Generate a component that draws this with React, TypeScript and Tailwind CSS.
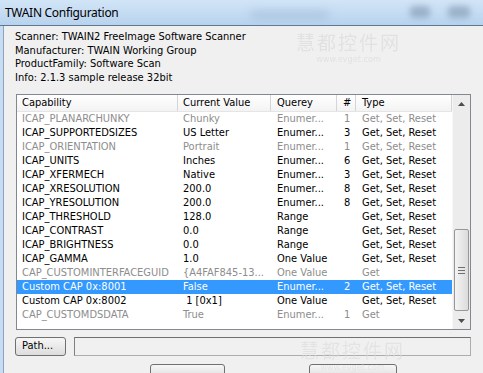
import React from "react";

type Row = {
  cap: string;
  val: string;
  q: string;
  n: string;
  type: string;
  off?: boolean;
  sel?: boolean;
};

const rows: Row[] = [
  { cap: "ICAP_PLANARCHUNKY", val: "Chunky", q: "Enumer...", n: "1", type: "Get, Set, Reset", off: true },
  { cap: "ICAP_SUPPORTEDSIZES", val: "US Letter", q: "Enumer...", n: "3", type: "Get, Set, Reset" },
  { cap: "ICAP_ORIENTATION", val: "Portrait", q: "Enumer...", n: "1", type: "Get, Set, Reset", off: true },
  { cap: "ICAP_UNITS", val: "Inches", q: "Enumer...", n: "6", type: "Get, Set, Reset" },
  { cap: "ICAP_XFERMECH", val: "Native", q: "Enumer...", n: "3", type: "Get, Set, Reset" },
  { cap: "ICAP_XRESOLUTION", val: "200.0", q: "Enumer...", n: "8", type: "Get, Set, Reset" },
  { cap: "ICAP_YRESOLUTION", val: "200.0", q: "Enumer...", n: "8", type: "Get, Set, Reset" },
  { cap: "ICAP_THRESHOLD", val: "128.0", q: "Range", n: "", type: "Get, Set, Reset" },
  { cap: "ICAP_CONTRAST", val: "0.0", q: "Range", n: "", type: "Get, Set, Reset" },
  { cap: "ICAP_BRIGHTNESS", val: "0.0", q: "Range", n: "", type: "Get, Set, Reset" },
  { cap: "ICAP_GAMMA", val: "1.0", q: "One Value", n: "", type: "Get, Set, Reset" },
  { cap: "CAP_CUSTOMINTERFACEGUID", val: "{A4FAF845-13...", q: "One Value", n: "", type: "Get", off: true },
  { cap: "Custom CAP 0x:8001", val: "False", q: "Enumer...", n: "2", type: "Get, Set, Reset", sel: true },
  { cap: "Custom CAP 0x:8002", val: " 1 [0x1]", q: "One Value", n: "", type: "Get, Set, Reset" },
  { cap: "CAP_CUSTOMDSDATA", val: "True", q: "Enumer...", n: "1", type: "Get", off: true },
];

function Watermark({ className }: { className: string }) {
  return (
    <div className={"pointer-events-none absolute flex flex-col items-center gap-[3px] text-[#dcdcdc] " + className}>
      <span className="text-[19px] leading-[20px] tracking-[2px] font-['Noto_Sans_CJK_SC',sans-serif]">慧都控件网</span>
      <span className="text-[9px] leading-[9px]">www.evget.com</span>
    </div>
  );
}

export default function App() {
  return (
    <div className="relative w-[483px] h-[373px] overflow-hidden bg-[#f0f0f0] font-['DejaVu_Sans_Condensed','DejaVu_Sans',sans-serif] font-stretch-condensed text-[11px] text-black">
      {/* title bar */}
      <div className="relative h-[26px] flex items-center pl-[5px] bg-gradient-to-b from-[#d2e5f7] to-[#b8d3ee] border-b border-[#5d7890]">
        <span className="text-[12px] tracking-[-0.3px] font-['Noto_Sans',sans-serif] font-stretch-normal text-black">TWAIN Configuration</span>
        <div className="absolute left-[250px] top-[10px] w-[80px] h-[10px] rounded-full bg-[#9fb9d4] opacity-50 blur-[4px]" />
        <div className="absolute left-[410px] top-[6px] w-[20px] h-[12px] rounded bg-[#6f86a0] opacity-50 blur-[3px]" />
        <div className="absolute left-[448px] top-[6px] w-[22px] h-[12px] rounded bg-[#6f86a0] opacity-50 blur-[3px]" />
      </div>

      <div className="flex h-[347px]">
        <div className="w-[3px] bg-[#c6ddf3]" />
        <div className="flex-1 border-l border-[#8fa4b8] pl-[11px] flex flex-col">
          {/* info */}
          <div className="pt-[4px] leading-[13.5px]">
            <div>Scanner: TWAIN2 FreeImage Software Scanner</div>
            <div>Manufacturer: TWAIN Working Group</div>
            <div>ProductFamily: Software Scan</div>
            <div>Info: 2.1.3 sample release 32bit</div>
          </div>

          {/* list */}
          <div className="mt-[10px] ml-[1px] w-[455px] h-[237px] border border-[#828790] bg-white flex">
            <div className="w-[435px] flex flex-col">
              <div className="h-[17px] flex items-stretch border-b border-[#e5e5e5] bg-gradient-to-b from-white to-[#f3f3f3]">
                <div className="w-[161px] pl-[5px] flex items-center border-r border-[#d5d5d5]">Capability</div>
                <div className="w-[93px] pl-[5px] flex items-center border-r border-[#d5d5d5]">Current Value</div>
                <div className="w-[66px] pl-[6px] flex items-center border-r border-[#d5d5d5]">Querey</div>
                <div className="w-[19px] pl-[6px] flex items-center border-r border-[#d5d5d5]">#</div>
                <div className="w-[96px] pl-[6px] flex items-center border-r border-[#d5d5d5]">Type</div>
              </div>
              {rows.map((r) => (
                <div
                  key={r.cap}
                  className={
                    "h-[14px] flex items-center whitespace-pre " +
                    (r.sel ? "bg-[#3399ff] text-white" : r.off ? "text-[#8d8d8d]" : "text-black")
                  }
                >
                  <div className="w-[161px] pl-[5px] overflow-hidden">{r.cap}</div>
                  <div className="w-[93px] pl-[5px] overflow-hidden">{r.val}</div>
                  <div className="w-[66px] pl-[6px]">{r.q}</div>
                  <div className="w-[19px] pl-[7px]">{r.n}</div>
                  <div className="w-[96px] pl-[6px]">{r.type}</div>
                </div>
              ))}
            </div>

            {/* scrollbar */}
            <div className="w-[18px] ml-auto flex flex-col bg-[#ececec] border-l border-[#f7f7f7]">
              <div className="h-[17px] flex items-center justify-center">
                <svg width="7" height="4" viewBox="0 0 7 4"><path d="M0 4 L3.5 0 L7 4 Z" fill="#4d4d4d" /></svg>
              </div>
              <div className="flex-1 flex flex-col pt-[117px] pb-[1px] px-[1px]">
                <div className="h-[82px] rounded-[2px] border border-[#979797] bg-gradient-to-r from-[#f4f4f4] to-[#dcdcdc] flex flex-col items-center justify-center gap-[2px]">
                  <div className="w-[7px] h-px bg-[#6f6f6f]" />
                  <div className="w-[7px] h-px bg-[#6f6f6f]" />
                  <div className="w-[7px] h-px bg-[#6f6f6f]" />
                </div>
              </div>
              <div className="h-[17px] flex items-center justify-center">
                <svg width="7" height="4" viewBox="0 0 7 4"><path d="M0 0 L3.5 4 L7 0 Z" fill="#4d4d4d" /></svg>
              </div>
            </div>
          </div>

          {/* path row */}
          <div className="mt-[7px] flex items-stretch h-[20px] gap-[8px]">
            <button className="w-[51px] border border-[#707070] rounded-[3px] bg-gradient-to-b from-[#f6f6f6] to-[#dddddd] text-left pl-[6px]">
              Path...
            </button>
            <div className="w-[397px] border border-[#abadb3] border-t-[#707070] border-l-[#808080] bg-[#f0f0f0]" />
          </div>

          {/* bottom buttons (partially visible) */}
          <div className="mt-[8px] flex gap-[84px] pl-[135px]">
            <div className="w-[75px] h-[12px] border border-[#707070] rounded-t-[3px] bg-gradient-to-b from-[#f6f6f6] to-[#e4e4e4]" />
            <div className="w-[88px] h-[12px] border border-[#707070] rounded-t-[3px] bg-gradient-to-b from-[#f6f6f6] to-[#e4e4e4]" />
          </div>
        </div>
      </div>

      <Watermark className="left-[296px] top-[32px] opacity-70" />
      <Watermark className="left-[300px] top-[340px] opacity-60" />
    </div>
  );
}
